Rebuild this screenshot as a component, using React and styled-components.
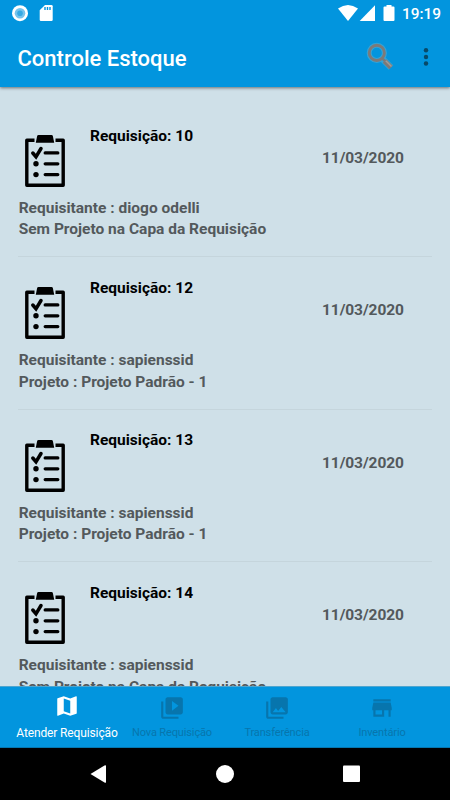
import React from 'react';
import styled, { createGlobalStyle } from 'styled-components';
import { MdMap, MdVideoLibrary, MdPhotoLibrary, MdStore } from 'react-icons/md';

const GlobalStyle = createGlobalStyle`
  * {
    box-sizing: border-box;
  }

  body {
    margin: 0;
    overflow: hidden;
    font-family: Roboto, 'Liberation Sans', sans-serif;
  }
`;

const Screen = styled.div`
  display: flex;
  flex-direction: column;
  width: 450px;
  height: 800px;
  overflow: hidden;
  background: #cfe0e8;
`;

const Header = styled.header`
  flex: none;
  height: 87px;
  background: #0295de;
  box-shadow: 0 1px 3px rgba(0, 0, 0, 0.5);
  z-index: 1;
`;

const StatusBar = styled.div`
  display: flex;
  justify-content: space-between;
  height: 27px;
  color: #fff;

  svg {
    display: block;
  }
`;

const Clock = styled.span`
  width: 40px;
  margin-right: 8px;
  font-size: 15.4px;
  font-weight: 500;
  line-height: 28px;
  white-space: nowrap;
`;

const StatusRight = styled.div`
  display: flex;
`;

const Toolbar = styled.div`
  display: flex;
  align-items: center;
  justify-content: space-between;
  height: 60px;
  padding-left: 17.5px;
`;

const Title = styled.h1`
  margin: 0;
  padding-top: 2px;
  color: #fff;
  font-size: 22px;
  font-weight: 500;
  white-space: nowrap;
`;

const Actions = styled.svg`
  display: block;
  width: 90px;
  height: 60px;
`;

const List = styled.ul`
  flex: 1;
  min-height: 0;
  margin: 0;
  padding: 18px 18px 0;
  overflow: hidden;
  list-style: none;
`;

const Item = styled.li`
  height: 152.45px;
  padding-top: 20px;
  border-bottom: 1.5px solid #c5d5dc;
  font-size: 15.5px;
  font-weight: 700;
  white-space: nowrap;
`;

const ItemTop = styled.div`
  display: flex;
  height: 73px;
`;

const Clipboard = styled.svg`
  flex: none;
  width: 42px;
  height: 54px;
  margin: 9px 24px 0 6px;
`;

const Name = styled.div`
  flex: 1;
  padding-top: 0.5px;
  color: #000;
  line-height: 20px;
`;

const DateText = styled.div`
  width: 110px;
  padding-top: 23px;
  color: #53595c;
  line-height: 20px;
  letter-spacing: -0.08px;
`;

const Detail = styled.div`
  padding-left: 0.7px;
  color: #53595c;
  line-height: 21.3px;
`;

const BottomNav = styled.nav`
  flex: none;
  display: flex;
  height: 62px;
  padding: 0 15.5px 0 14.5px;
  background: #0295de;
  border-top: 1px solid #4da5cf;
  border-bottom: 1px solid #0577b0;
`;

const Tab = styled.div`
  flex: 1;
  display: flex;
  flex-direction: column;
  align-items: center;
  padding-top: ${({ $active }) => ($active ? '6px' : '8px')};
  color: ${({ $active }) => ($active ? '#fff' : '#0775ad')};

  svg {
    flex: none;
    width: 26px;
    height: 26px;
  }
`;

const TabLabel = styled.span`
  margin-top: ${({ $active }) => ($active ? '6px' : '4px')};
  font-size: ${({ $active }) => ($active ? '12px' : '11px')};
  line-height: 16px;
  letter-spacing: -0.13px;
  white-space: nowrap;
`;

const SystemNav = styled.div`
  flex: none;
  height: 52px;
  background: #000;

  svg {
    display: block;
  }
`;

const requests = [
  {
    id: 10,
    date: '11/03/2020',
    requester: 'diogo odelli',
    project: 'Sem Projeto na Capa da Requisição',
  },
  {
    id: 12,
    date: '11/03/2020',
    requester: 'sapienssid',
    project: 'Projeto : Projeto Padrão - 1',
  },
  {
    id: 13,
    date: '11/03/2020',
    requester: 'sapienssid',
    project: 'Projeto : Projeto Padrão - 1',
  },
  {
    id: 14,
    date: '11/03/2020',
    requester: 'sapienssid',
    project: 'Sem Projeto na Capa da Requisição',
  },
];

const tabs = [
  { label: 'Atender Requisição', Icon: MdMap, active: true },
  { label: 'Nova Requisição', Icon: MdVideoLibrary },
  { label: 'Transferência', Icon: MdPhotoLibrary },
  { label: 'Inventário', Icon: MdStore },
];

const ClipboardIcon = () => (
  <Clipboard viewBox='0 0 42 54'>
    <path
      d='M10.5 6.2H2.8v45h36.4v-45h-7.700'
      fill='none'
      stroke='#000'
      strokeWidth='3.4'
      strokeLinejoin='round'
    />
    <path d='M14.5 1h13q1.2 0 1.4 1.200l1.300 6.500H11.800l1.300-6.500Q13.300 1 14.500 1z' />
    <path
      d='M8.800 19l3.200 3.800L17 14.500'
      fill='none'
      stroke='#000'
      strokeWidth='3.5'
      strokeLinecap='round'
    />
    <path
      d='M21.200 18.900h12.600M21.200 29.800h12.600M21.200 40.600h12.600'
      stroke='#000'
      strokeWidth='3.3'
      strokeLinecap='round'
    />
    <circle cx='12' cy='29.8' r='2.7' />
    <circle cx='12' cy='40.6' r='2.7' />
  </Clipboard>
);

const App = () => (
  <>
    <GlobalStyle />
    <Screen>
      <Header>
        <StatusBar>
          <svg width='60' height='27' viewBox='0 0 60 27'>
            <circle cx='20' cy='13.2' r='8' fill='#fff' />
            <circle cx='20' cy='13.2' r='5.3' fill='#75c4ed' />
            <circle cx='20' cy='13.2' r='2.8' fill='#35a9e4' />
            <path
              d='M45 5h6.500q1.200 0 1.200 1.200v13.600q0 1.200-1.200 1.200H41q-1.300 0-1.300-1.200V10.200z'
              fill='#fff'
            />
            <path d='M45 7v3M47.500 7v3M50 7v3' stroke='#0295de' strokeWidth='1.4' />
          </svg>
          <StatusRight>
            <svg width='64' height='27' viewBox='0 0 64 27' fill='#fff'>
              <path d='M0 8.500Q10 1.500 20 8.500L10 21z' />
              <path d='M37 5.200V21H21.700z' />
              <path d='M48.500 5h5v1.400h2q1 0 1 1V20q0 1-1 1h-9q-1 0-1-1V7.400q0-1 1-1h2z' />
            </svg>
            <Clock>19:19</Clock>
          </StatusRight>
        </StatusBar>
        <Toolbar>
          <Title>Controle Estoque</Title>
          <Actions viewBox='0 0 90 60'>
            <g fill='none' stroke='#35a3d6' strokeWidth='5'>
              <circle cx='16.8' cy='25.9' r='7.600' />
              <path d='M22 31.500l9 9' strokeWidth='6.500' />
            </g>
            <g fill='none' stroke='#7c7a79'>
              <circle cx='16.8' cy='25.9' r='7.600' strokeWidth='2.900' />
              <path d='M22 31.200l3 3' strokeWidth='2.500' />
              <path d='M24.500 34l6.500 6.500' strokeWidth='5' />
            </g>
            <path d='M25.800 33.800l5.700 5.700' stroke='#a09c9a' strokeWidth='1.500' />
            <g fill='#084968'>
              <circle cx='66' cy='23.300' r='2.200' />
              <circle cx='66' cy='30' r='2.200' />
              <circle cx='66' cy='36.500' r='2.200' />
            </g>
          </Actions>
        </Toolbar>
      </Header>
      <List>
        {requests.map(({ id, date, requester, project }) => (
          <Item key={id}>
            <ItemTop>
              <ClipboardIcon />
              <Name>Requisição: {id}</Name>
              <DateText>{date}</DateText>
            </ItemTop>
            <Detail>Requisitante : {requester}</Detail>
            <Detail>{project}</Detail>
          </Item>
        ))}
      </List>
      <BottomNav>
        {tabs.map(({ label, Icon, active }) => (
          <Tab key={label} $active={active}>
            <Icon />
            <TabLabel $active={active}>{label}</TabLabel>
          </Tab>
        ))}
      </BottomNav>
      <SystemNav>
        <svg width='450' height='52' viewBox='0 0 450 52' fill='#fff'>
          <path d='M90.500 26L104.500 17.500q1.500-.8 1.500.6v15.800q0 1.400-1.500.6z' />
          <circle cx='225' cy='26' r='9' />
          <rect x='343' y='17.500' width='17' height='16.500' rx='1' />
        </svg>
      </SystemNav>
    </Screen>
  </>
);

export default App;
